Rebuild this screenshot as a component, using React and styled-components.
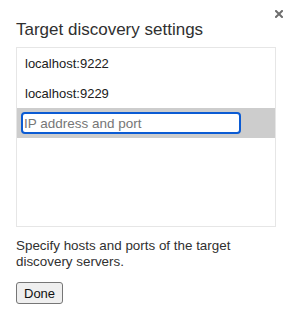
import React from 'react';
import styled, { createGlobalStyle } from 'styled-components';

const GlobalStyle = createGlobalStyle`
  body {
    margin: 0;
    background: #fff;
    font-family: "Liberation Sans", Arial, sans-serif;
  }
`;

const Dialog = styled.div`
  position: relative;
  width: 292px;
  height: 314px;
  box-sizing: border-box;
  padding: 20px 16px 0 16px;
  display: flex;
  flex-direction: column;
  align-items: flex-start;
`;

const Close = styled.button`
  position: absolute;
  top: 10px;
  right: 9px;
  width: 8px;
  height: 8px;
  padding: 0;
  border: none;
  background: none;
  cursor: pointer;
  svg {
    display: block;
  }
`;

const Title = styled.h2`
  margin: 0;
  font-size: 17px;
  font-weight: normal;
  line-height: 20px;
  color: #303030;
`;

const List = styled.div`
  margin-top: 7px;
  width: 100%;
  height: 180px;
  box-sizing: border-box;
  border: 1px solid #e6e6e6;
  display: flex;
  flex-direction: column;
`;

const Row = styled.div`
  height: 30px;
  display: flex;
  align-items: center;
  padding: 0 8px;
  font-size: 13px;
  color: #202020;
  background: ${p => (p.$editing ? '#cdcdcd' : 'transparent')};
  ${p => p.$editing && 'padding: 0 4px;'}
`;

const Field = styled.input`
  width: 220px;
  height: 22px;
  box-sizing: border-box;
  border: 2px solid #0b5bd3;
  border-radius: 4px;
  padding: 0 1px;
  font-family: inherit;
  font-size: 13.5px;
  color: #202020;
  background: #fff;
  outline: none;
  &::placeholder {
    color: #767676;
  }
`;

const Hint = styled.p`
  margin: 11px 0 0;
  font-size: 13.4px;
  line-height: 16px;
  color: #303030;
`;

const DoneButton = styled.button`
  margin-top: 12px;
  height: 22px;
  padding: 0 7px;
  font-family: inherit;
  font-size: 13px;
  color: #111;
  background: #efefef;
  border: 1px solid #767676;
  border-radius: 3px;
`;

const hosts = ['localhost:9222', 'localhost:9229'];

export default function App() {
  return (
    <>
      <GlobalStyle />
      <Dialog>
        <Close aria-label="Close">
          <svg width="8" height="8" viewBox="0 0 8 8">
            <path d="M1 1 L7 7 M7 1 L1 7" stroke="#6e6e6e" strokeWidth="2" strokeLinecap="square" />
          </svg>
        </Close>
        <Title>Target discovery settings</Title>
        <List>
          {hosts.map(h => (
            <Row key={h}>{h}</Row>
          ))}
          <Row $editing>
            <Field placeholder="IP address and port" />
          </Row>
        </List>
        <Hint>Specify hosts and ports of the target discovery servers.</Hint>
        <DoneButton>Done</DoneButton>
      </Dialog>
    </>
  );
}
